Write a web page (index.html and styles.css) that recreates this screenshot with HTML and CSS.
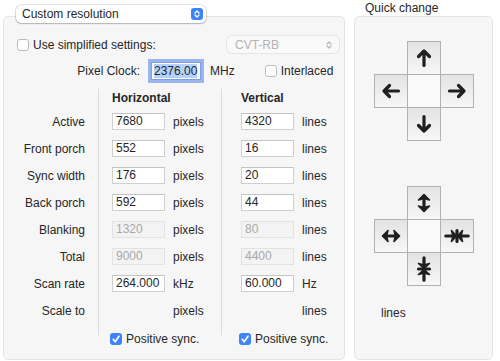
FILE: index.html
```html
<!DOCTYPE html>
<html lang="en">

<head>
  <meta charset="utf-8">
  <title>Custom resolution</title>
  <link rel="stylesheet" href="styles.css">
</head>

<body>
  <div class="window">
    <div class="main">
      <div class="popup">
        <span>Custom resolution</span>
        <span class="stepper">
          <svg width="12" height="12" viewBox="0 0 12 12"><path d="M4 5 6 3 8 5M4 7 6 9 8 7" fill="none" stroke="#fff" stroke-width="1.3" stroke-linecap="round" stroke-linejoin="round"/></svg>
        </span>
      </div>
      <div class="box">
        <div class="opts">
          <label class="check"><span class="cb"></span>Use simplified settings:</label>
          <div class="popup off">
            <span>CVT-RB</span>
            <svg width="12" height="12" viewBox="0 0 12 12"><path d="M4 5 6 3 8 5M4 7 6 9 8 7" fill="none" stroke="#b5b5b5" stroke-width="1.2" stroke-linecap="round" stroke-linejoin="round"/></svg>
          </div>
        </div>
        <div class="clock">
          <span class="clock-label">Pixel Clock:</span>
          <span class="fld focus"><span class="sel">2376.00</span></span>
          <span class="mhz">MHz</span>
          <label class="check inter"><span class="cb"></span>Interlaced</label>
        </div>
        <div class="table">
          <div class="col labels">
            <div class="head"></div>
            <div class="row">Active</div>
            <div class="row">Front porch</div>
            <div class="row">Sync width</div>
            <div class="row">Back porch</div>
            <div class="row">Blanking</div>
            <div class="row">Total</div>
            <div class="row">Scan rate</div>
            <div class="row">Scale to</div>
          </div>
          <div class="col horiz">
            <div class="head">Horizontal</div>
            <div class="row"><span class="fld">7680</span><span class="unit">pixels</span></div>
            <div class="row"><span class="fld">552</span><span class="unit">pixels</span></div>
            <div class="row"><span class="fld">176</span><span class="unit">pixels</span></div>
            <div class="row"><span class="fld">592</span><span class="unit">pixels</span></div>
            <div class="row"><span class="fld off">1320</span><span class="unit">pixels</span></div>
            <div class="row"><span class="fld off">9000</span><span class="unit">pixels</span></div>
            <div class="row"><span class="fld">264.000</span><span class="unit">kHz</span></div>
            <div class="row"><span class="gap"></span><span class="unit">pixels</span></div>
            <div class="row sync">
              <label class="check"><span class="cb on"><svg width="12" height="12" viewBox="0 0 12 12"><path d="M3.2 6.3 5.2 8.8 9 3.3" fill="none" stroke="#fff" stroke-width="1.7" stroke-linecap="round" stroke-linejoin="round"/></svg></span>Positive sync.</label>
            </div>
          </div>
          <div class="col vert">
            <div class="head">Vertical</div>
            <div class="row"><span class="fld">4320</span><span class="unit">lines</span></div>
            <div class="row"><span class="fld">16</span><span class="unit">lines</span></div>
            <div class="row"><span class="fld">20</span><span class="unit">lines</span></div>
            <div class="row"><span class="fld">44</span><span class="unit">lines</span></div>
            <div class="row"><span class="fld off">80</span><span class="unit">lines</span></div>
            <div class="row"><span class="fld off">4400</span><span class="unit">lines</span></div>
            <div class="row"><span class="fld">60.000</span><span class="unit">Hz</span></div>
            <div class="row"><span class="gap"></span><span class="unit">lines</span></div>
            <div class="row sync">
              <label class="check"><span class="cb on"><svg width="12" height="12" viewBox="0 0 12 12"><path d="M3.2 6.3 5.2 8.8 9 3.3" fill="none" stroke="#fff" stroke-width="1.7" stroke-linecap="round" stroke-linejoin="round"/></svg></span>Positive sync.</label>
            </div>
          </div>
        </div>
      </div>
    </div>

    <div class="side">
      <div class="side-title">Quick change</div>
      <div class="side-box">
        <div class="cross">
          <span class="blank"></span>
          <span class="btn"><svg width="20" height="20" viewBox="0 0 20 20"><path d="M10 17.5V3M4.5 8.5 10 3 15.5 8.5"/></svg></span>
          <span class="blank"></span>
          <span class="btn"><svg width="20" height="20" viewBox="0 0 20 20"><path d="M17.5 10H3M8.5 4.5 3 10 8.5 15.5"/></svg></span>
          <span class="btn mid"></span>
          <span class="btn"><svg width="20" height="20" viewBox="0 0 20 20"><path d="M2.5 10H17M11.5 4.5 17 10 11.5 15.5"/></svg></span>
          <span class="blank"></span>
          <span class="btn"><svg width="20" height="20" viewBox="0 0 20 20"><path d="M10 2.5V17M4.5 11.5 10 17 15.5 11.5"/></svg></span>
          <span class="blank"></span>
        </div>
        <div class="cross second">
          <span class="blank"></span>
          <span class="btn"><svg width="20" height="22" viewBox="0 0 20 22"><path d="M10 4V18"/><path class="head" d="M4.5 8 10 2.5 15.5 8 10 6.5ZM4.5 14 10 19.5 15.5 14 10 15.5Z"/></svg></span>
          <span class="blank"></span>
          <span class="btn"><svg width="22" height="20" viewBox="0 0 22 20"><path d="M4 10H18"/><path class="head" d="M8 4.5 2.5 10 8 15.5 6.5 10ZM14 4.5 19.5 10 14 15.5 15.5 10Z"/></svg></span>
          <span class="btn mid"></span>
          <span class="btn"><svg width="26" height="20" viewBox="0 0 26 20"><path d="M1.8 10H8M24.2 10H18M13 4.5V15.5" /><path class="head" d="M7.5 4.5 12.5 10 7.5 15.5 9 10ZM18.5 4.5 13.5 10 18.5 15.5 17 10Z"/></svg></span>
          <span class="blank"></span>
          <span class="btn"><svg width="20" height="26" viewBox="0 0 20 26"><path d="M10 1.8V8M10 24.2V18M4.5 13H15.5"/><path class="head" d="M4.5 7.5 10 12.5 15.5 7.5 10 9ZM4.5 18.5 10 13.5 15.5 18.5 10 17Z"/></svg></span>
          <span class="blank"></span>
        </div>
        <div class="side-unit">lines</div>
      </div>
    </div>
  </div>
</body>

</html>
```

FILE: styles.css
```css
body {
  margin: 0;
  background: #fff;
  color: #262626;
  font: 12px "Liberation Sans", Arial, sans-serif;
}

.window {
  display: flex;
}

.main {
  width: 342px;
  margin-left: 3px;
}

.popup {
  position: relative;
  z-index: 1;
  display: flex;
  align-items: center;
  justify-content: space-between;
  box-sizing: border-box;
  width: 190px;
  height: 18px;
  margin: 5px 0 0 13px;
  padding: 0 3px 0 6px;
  background: #fff;
  border-radius: 5px;
  box-shadow: 0 0 0 0.5px rgba(0, 0, 0, .22), 0 1px 1.5px rgba(0, 0, 0, .18);
}

.stepper {
  display: flex;
  width: 12px;
  height: 12px;
  border-radius: 3px;
  background: #3d84f6;
}

.popup.off {
  width: 112px;
  height: 17px;
  margin: 0 0 0 auto;
  padding: 0 4px 0 8px;
  color: #b3b3b3;
  background: #f9f9f9;
  box-shadow: 0 0 0 1px #e6e6e6;
}

.box {
  box-sizing: border-box;
  height: 344px;
  margin-top: -7px;
  background: #f6f6f6;
  border: 1px solid #e4e4e4;
  border-radius: 5px;
}

.opts {
  display: flex;
  align-items: center;
  height: 19px;
  margin: 18px 5px 0 13px;
}

.check {
  display: flex;
  align-items: center;
  gap: 4px;
  white-space: nowrap;
}

.cb {
  display: flex;
  flex-shrink: 0;
  box-sizing: border-box;
  width: 12px;
  height: 12px;
  background: #fff;
  border: 1px solid #bcbcbc;
  border-radius: 3px;
}

.cb.on {
  background: #3d84f6;
  border: 0;
}

.clock {
  display: flex;
  align-items: center;
  height: 25px;
  margin-top: 4px;
}

.clock-label {
  flex-shrink: 0;
  width: 136px;
  text-align: right;
}

.fld {
  display: block;
  flex-shrink: 0;
  box-sizing: border-box;
  width: 53px;
  height: 17px;
  padding-left: 3px;
  line-height: 15px;
  background: #fff;
  border: 1px solid #d0d0d0;
  border-top-color: #c4c4c4;
}

.fld.off {
  color: #a9a9a9;
  background: #f3f3f3;
  border-color: #e2e2e2;
}

.fld.focus {
  width: 50px;
  height: 18px;
  margin-left: 11px;
  padding-left: 2px;
  line-height: 16px;
  border-color: #7d9fe6;
  box-shadow: 0 0 0 3px #9ab6ef;
}

.sel {
  background: #b4d2fb;
}

.mhz {
  margin-left: 9px;
}

.inter {
  margin-left: 30px;
}

.table {
  display: flex;
  height: 246px;
  margin-top: 6px;
}

.col {
  display: flex;
  flex-direction: column;
}

.head {
  height: 19px;
  line-height: 19px;
  font-weight: 700;
}

.row {
  display: flex;
  align-items: center;
  height: 27px;
  flex-shrink: 0;
}

.labels {
  width: 81px;
  margin-right: 13px;
}

.labels .row {
  justify-content: flex-end;
}

.horiz,
.vert {
  border-left: 1px solid #dcdcdc;
}

.horiz {
  width: 109px;
  padding-left: 13px;
}

.vert {
  padding-left: 19px;
}

.unit {
  margin-left: 8px;
}

.gap {
  width: 53px;
}

.row.sync {
  box-sizing: border-box;
  height: 11px;
  padding-top: 8px;
  align-items: flex-start;
  margin-left: -2px;
}

.side {
  width: 139px;
  margin-left: 9px;
}

.side-title {
  height: 16px;
  padding-left: 11px;
  line-height: 17px;
}

.side-box {
  box-sizing: border-box;
  height: 344px;
  padding-top: 24px;
  background: #f6f6f6;
  border: 1px solid #e4e4e4;
  border-radius: 5px;
}

.cross {
  display: grid;
  grid-template-columns: repeat(3, 33px);
  grid-template-rows: repeat(3, 33px);
  width: 100px;
  height: 100px;
  margin-left: 19px;
}

.cross.second {
  margin-top: 45px;
}

.btn {
  display: flex;
  align-items: center;
  justify-content: center;
  box-sizing: border-box;
  width: 34px;
  height: 34px;
  background: linear-gradient(#e3e3e3, #f7f7f7);
  border: 1px solid #b1b1b1;
}

.btn.mid {
  background: #f9f9f9;
}

.btn svg path {
  fill: none;
  stroke: #1f1f1f;
  stroke-width: 3.2;
  stroke-linecap: round;
  stroke-linejoin: round;
}

.btn svg path.head {
  fill: #1f1f1f;
  stroke-width: 1.6;
}

.side-unit {
  margin: 19px 0 0 26px;
  line-height: 16px;
}
```
